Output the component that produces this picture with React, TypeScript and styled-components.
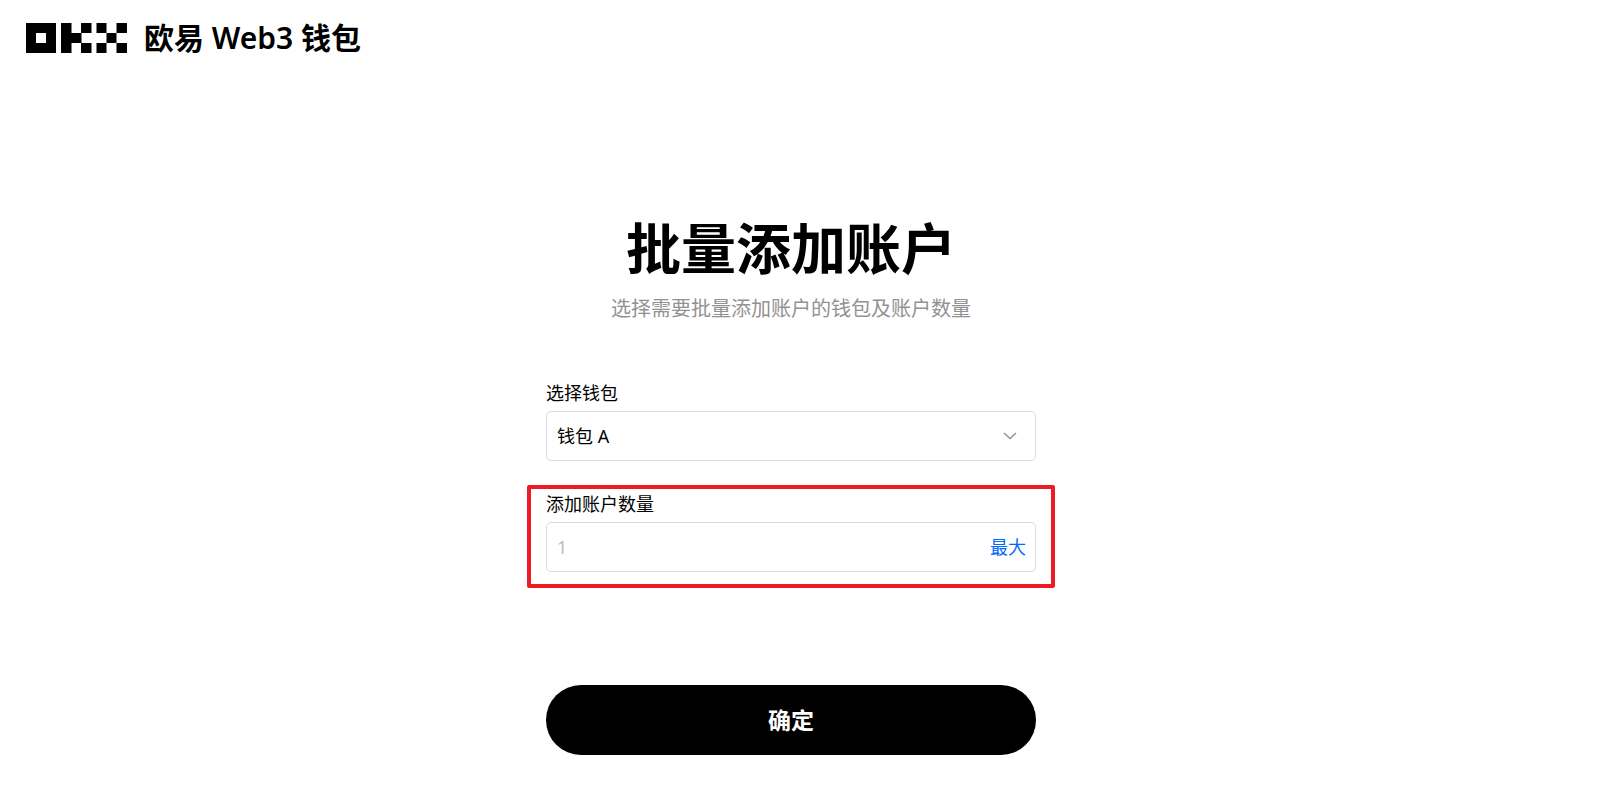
import React from "react";
import styled, { createGlobalStyle } from "styled-components";

const GlobalStyle = createGlobalStyle`
  *, *::before, *::after { box-sizing: border-box; }
  body {
    margin: 0;
    background: #fff;
    color: #000;
    font-family: "Noto Sans", "Noto Sans CJK SC", sans-serif;
  }
`;

const Header = styled.header`
  display: flex;
  align-items: center;
  gap: 16px;
  height: 76px;
  padding: 0 26px;
`;

const Brand = styled.span`
  font-size: 30px;
  line-height: 40px;
  font-weight: 600;
  white-space: nowrap;
`;

const Main = styled.main`
  display: flex;
  flex-direction: column;
  align-items: center;
  padding: 137px 25px 56px 0;
`;

const Title = styled.h1`
  margin: 0;
  font-size: 55px;
  line-height: 70px;
  font-weight: 700;
`;

const Subtitle = styled.p`
  margin: 12px 0 0;
  font-size: 20px;
  line-height: 28px;
  color: #929292;
`;

const Form = styled.form`
  display: flex;
  flex-direction: column;
  width: 100%;
  max-width: 490px;
  margin-top: 57px;
`;

const Field = styled.div<{ $marked?: boolean }>`
  position: relative;
  display: flex;
  flex-direction: column;
  gap: 5px;

  & + & {
    margin-top: 30px;
  }

  ${({ $marked }) =>
    $marked &&
    `&::after {
      content: "";
      position: absolute;
      inset: -6px -19px -16px;
      border: 4px solid #ed1c24;
      border-radius: 2px;
      pointer-events: none;
    }`}
`;

const Label = styled.label`
  font-size: 18px;
  line-height: 26px;
`;

const ControlBox = styled.div`
  display: flex;
  align-items: center;
  height: 50px;
  border: 1px solid #dadada;
  border-radius: 5px;
`;

const WalletSelect = styled.select`
  flex: 1;
  min-width: 0;
  height: 48px;
  margin-right: -42px;
  padding: 0 42px 0 10px;
  appearance: none;
  border: 0;
  outline: 0;
  background: transparent;
  font: inherit;
  font-size: 18px;
  color: #000;
`;

const Chevron = styled.svg`
  width: 14px;
  height: 8px;
  margin-right: 18px;
  margin-left: 10px;
  pointer-events: none;
`;

const CountInput = styled.input`
  flex: 1;
  min-width: 0;
  height: 48px;
  padding: 0 10px;
  border: 0;
  outline: 0;
  background: transparent;
  font: inherit;
  font-size: 18px;

  &::placeholder {
    color: #bdbdbd;
    opacity: 1;
  }
`;

const MaxButton = styled.button`
  padding: 0 9px;
  border: 0;
  background: none;
  font: inherit;
  font-size: 18px;
  line-height: 26px;
  color: #0569ff;
  cursor: pointer;
`;

const SubmitButton = styled.button`
  height: 70px;
  margin-top: 113px;
  padding: 0 16px 2px;
  border: 0;
  border-radius: 35px;
  background: #000;
  color: #fff;
  font: inherit;
  font-size: 23px;
  font-weight: 700;
  cursor: pointer;
`;

const OkxLogo = () => (
  <svg width="102" height="30" viewBox="0 0 102 30" role="img" aria-label="OKX">
    <path fillRule="evenodd" d="M0 0H30V30H0ZM10 10V20H20V10Z" />
    <path d="M35 0H45.5V10H55.5V20H45.5V30H35Z" />
    <path d="M55 0H65.5V10H55ZM55 20H65.5V30H55Z" />
    <path d="M70.5 0H80.5V10H70.5ZM90.5 0H101V10H90.5ZM80.5 10H90.5V20H80.5ZM70.5 20H80.5V30H70.5ZM90.5 20H101V30H90.5Z" />
  </svg>
);

export default function App() {
  return (
    <>
      <GlobalStyle />
      <Header>
        <OkxLogo />
        <Brand>欧易 Web3 钱包</Brand>
      </Header>
      <Main>
        <Title>批量添加账户</Title>
        <Subtitle>选择需要批量添加账户的钱包及账户数量</Subtitle>
        <Form onSubmit={(e) => e.preventDefault()}>
          <Field>
            <Label htmlFor="wallet">选择钱包</Label>
            <ControlBox>
              <WalletSelect id="wallet">
                <option>钱包 A</option>
              </WalletSelect>
              <Chevron viewBox="0 0 14 8" aria-hidden="true">
                <path d="M1 1L7 6.5L13 1" fill="none" stroke="#929292" strokeWidth="1.5" />
              </Chevron>
            </ControlBox>
          </Field>
          <Field $marked>
            <Label htmlFor="count">添加账户数量</Label>
            <ControlBox>
              <CountInput id="count" inputMode="numeric" placeholder="1" />
              <MaxButton type="button">最大</MaxButton>
            </ControlBox>
          </Field>
          <SubmitButton type="submit">确定</SubmitButton>
        </Form>
      </Main>
    </>
  );
}
